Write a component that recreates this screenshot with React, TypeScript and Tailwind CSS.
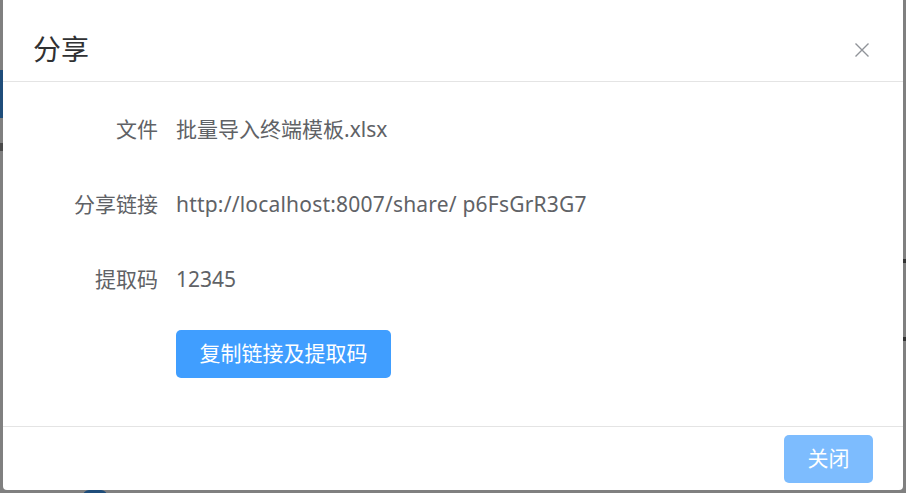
import React from "react";

const font = { fontFamily: '"Noto Sans", "Noto Sans CJK SC", sans-serif' };

export default function App() {
  return (
    <div
      className="relative w-[906px] h-[493px] overflow-hidden bg-[#808080]"
      style={font}
    >
      {/* page behind the overlay */}
      <div className="absolute left-0 top-[70px] w-[3px] h-[48px] bg-[#1f4d7a]" />
      <div className="absolute left-0 top-[143px] w-[3px] h-[8px] bg-[#4a4a4a]" />
      <div className="absolute left-[83px] top-[490px] w-[24px] h-[6px] rounded-t-full bg-[#1f4d7a]" />
      <div className="absolute right-0 top-[259px] w-[3px] h-[4px] bg-[#333]" />
      <div className="absolute right-0 top-[337px] w-[3px] h-[4px] bg-[#333]" />

      <div className="ml-[3px] w-[900px] h-[490px] bg-white rounded-b-[4px] flex flex-col">
        {/* header */}
        <div className="h-[82px] border-b border-[#e4e4e4] flex items-start justify-between pl-[30px] pr-[32px]">
          <div className="pt-[31px] text-[28px] leading-[36px] text-[#303133]">分享</div>
          <button className="mt-[41px] w-[18px] h-[18px] flex items-center justify-center text-[#909399]">
            <svg width="16" height="16" viewBox="0 0 16 16" fill="none" stroke="currentColor" strokeWidth="1.4">
              <path d="M1.5 1.5 L14.5 14.5 M14.5 1.5 L1.5 14.5" />
            </svg>
          </button>
        </div>

        {/* body */}
        <div className="flex-1 pt-[28px] flex flex-col text-[21px] text-[#606266]">
          <div className="h-[40px] flex items-center">
            <div className="w-[155px] text-right">文件</div>
            <div className="ml-[18px]">批量导入终端模板.xlsx</div>
          </div>
          <div className="mt-[35px] h-[40px] flex items-center">
            <div className="w-[155px] text-right">分享链接</div>
            <div className="ml-[18px] tracking-[0.2px]">http://localhost:8007/share/ p6FsGrR3G7</div>
          </div>
          <div className="mt-[35px] h-[40px] flex items-center">
            <div className="w-[155px] text-right">提取码</div>
            <div className="ml-[18px]">12345</div>
          </div>
          <div className="mt-[30px] pl-[173px]">
            <button className="w-[215px] h-[48px] rounded-[5px] bg-[#409eff] text-white text-[21px]">
              复制链接及提取码
            </button>
          </div>
        </div>

        {/* footer */}
        <div className="h-[64px] border-t border-[#e4e4e4] flex justify-end pr-[30px] pt-[8px]">
          <button className="w-[89px] h-[48px] rounded-[5px] bg-[#7dbcfe] text-white text-[21px]">
            关闭
          </button>
        </div>
      </div>
    </div>
  );
}
